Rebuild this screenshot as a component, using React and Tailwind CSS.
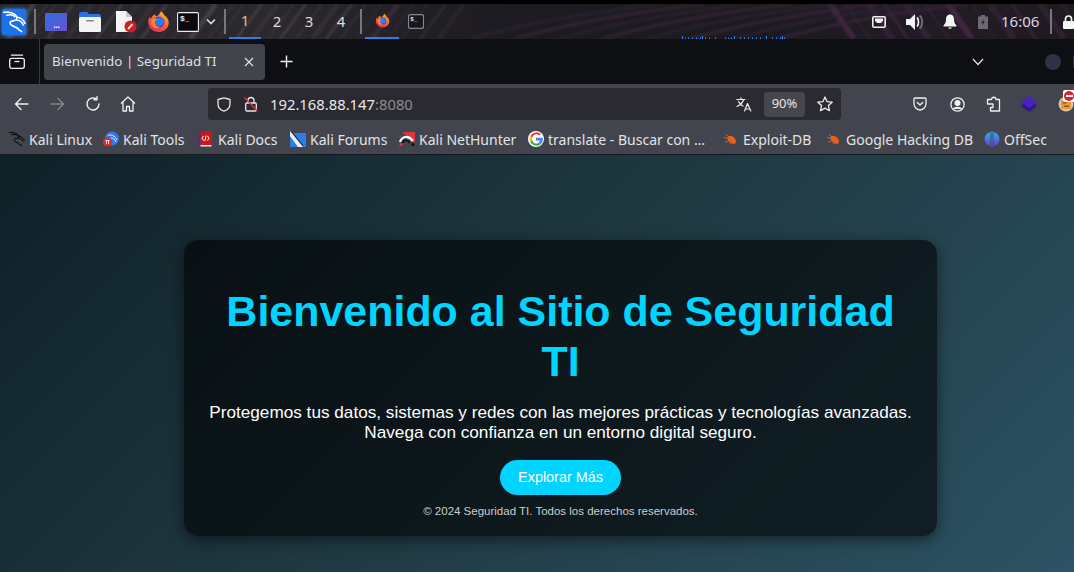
import React from "react";

const Kali = ({ c = "#fff", s = 24, w = 1.7 }) => (
  <svg width={s} height={s} viewBox="0 0 24 24" fill="none" stroke={c} strokeWidth={w} strokeLinecap="round" strokeLinejoin="round">
    <path d="M1 2.5C6 1.5 12 3 14 6.5C15.5 9.5 13.5 11.2 10.5 11.3C7.5 11.5 6.5 13.5 8.5 15.5C10.5 17.5 14.5 17.5 16.5 20.5" />
    <path d="M4 5.5C7.5 4.5 11 5.5 12.5 7M15 7.5C18 8 21.5 10 23 14M14.5 10.5C17.5 11 20 12.5 21 15.5" />
    <path d="M16.5 20.5L19.5 22.5" />
  </svg>
);

const Firefox = ({ s = 22, id = "ffa" }) => (
  <svg width={s} height={s} viewBox="0 0 24 24">
    <defs>
      <linearGradient id={id} x1="0.8" y1="0" x2="0.2" y2="1">
        <stop offset="0" stopColor="#ffbd2e" />
        <stop offset="0.45" stopColor="#ff6b2b" />
        <stop offset="1" stopColor="#e0245e" />
      </linearGradient>
    </defs>
    <path d="M12 23C5.5 23 1.3 18 1.3 12.5C1.3 10 2 8.2 3 7C3.2 8 3.6 8.6 4.3 9C5 6.5 6.8 5 8.5 4.5C8.2 5.5 8.7 6.2 10 6.6C12 5.8 13.5 4 14.5 1.2C17 3 17.6 4.2 18 5.4C21 7.5 22.7 10 22.7 13C22.7 18.5 18.2 23 12 23Z" fill={`url(#${id})`} />
    <circle cx="12.2" cy="12.8" r="6" fill="#5b3bd6" />
    <circle cx="13" cy="12.3" r="4.2" fill="#2f7df0" />
    <path d="M5 10C7 8.5 9.5 8.5 11 10C9 10.5 8.3 11.5 8.3 13C8.3 16 11 18 14 17.6C12 19.6 7 19.6 5 16C4.2 14.2 4.2 12 5 10Z" fill="#ff8a2a" />
  </svg>
);

const Terminal = ({ s = 22, h = 19, small }) => (
  <svg width={s} height={h} viewBox="0 0 22 20" fill="none">
    <rect x="0.6" y="0.6" width="20.8" height="18.8" rx={small ? 2.5 : 1} fill={small ? "#17171b" : "#0b0b0d"} stroke={small ? "#85858a" : "#ececec"} strokeWidth={small ? 1.8 : 1.1} />
    <text x="3" y="9" fill="#eee" fontSize="8" fontFamily="Liberation Mono, monospace" fontWeight="700">$_</text>
  </svg>
);

const Streaks = () => (
  <svg className="absolute inset-0 blur-[0.8px]" width="1074" height="35" viewBox="0 0 1074 35" fill="none" aria-hidden="true">
    {[8, 22, 30, 47, 66, 78, 96, 112, 128, 141, 160, 172, 190, 208, 218, 236, 252, 268, 280, 296, 312, 326, 340, 356, 372, 388, 402, 420, 438].map((x, i) => (
      <path key={i} d={`M${x} 35 L${x + 26} 0`} stroke={i % 3 === 0 ? "#4b484f" : "#38353b"} strokeWidth={i % 4 === 0 ? 5 : 2.5} opacity={x > 340 ? 0.35 : 0.7} />
    ))}
    {[830, 846, 868, 884, 905, 925, 948, 972, 990, 1012, 1040, 1062].map((x, i) => (
      <path key={"b" + i} d={`M${x} 0 L${x + 24} 35`} stroke={i % 3 === 0 ? "#5a3158" : "#3d2a40"} strokeWidth={i % 2 ? 2 : 6} opacity="0.55" />
    ))}
    {Array.from({ length: 8 }).map((_, i) => (
      <path key={"c" + i} d={`M${470 + i * 44} 35 C${530 + i * 44} 18 ${590 + i * 44} 8 ${660 + i * 44} 0`} stroke={i % 2 ? "#3a2638" : "#2c2530"} strokeWidth="4" opacity="0.6" />
    ))}
  </svg>
);

const Sep = ({ cls = "" }) => <span className={`block w-[2px] h-[25px] bg-[#77777c] shrink-0 ${cls}`} />;

const Workspace = ({ n, active }) => (
  <div className={`relative w-[32px] h-[35px] flex items-center justify-center text-[15px] ${active ? "text-[#e9b98a] border-b-2 border-[#2f7be8]" : "text-[#dcdcdc]"}`}>
    {n}
  </div>
);

const TopBar = () => (
  <div className="relative h-[35px] shrink-0 bg-[linear-gradient(90deg,#29272c_0%,#2b282e_25%,#1e1b22_45%,#1b1a20_70%,#221b25_85%,#1f1a20_100%)] overflow-hidden flex items-center">
    <Streaks />
    <div className="relative flex items-center w-full h-full">
      <div className="ml-[2px] w-[24px] h-[26px] rounded-[2px] bg-[#1c72ea] shadow-[0_0_4px_#3a90ff] flex items-center justify-center shrink-0">
        <Kali s={23} />
      </div>
      <Sep cls="ml-[8px]" />
      <svg className="ml-[9px] shrink-0" width="22" height="18" viewBox="0 0 22 18">
        <defs>
          <linearGradient id="pf" x1="0" y1="0" x2="1" y2="1">
            <stop offset="0" stopColor="#2f6fe0" />
            <stop offset="1" stopColor="#6a4fd0" />
          </linearGradient>
        </defs>
        <rect width="22" height="18" rx="1" fill="url(#pf)" />
        <rect x="9" y="13.5" width="1.4" height="1.4" fill="#fff" />
        <rect x="11" y="13.5" width="1.4" height="1.4" fill="#fff" />
        <rect x="13" y="13.5" width="1.4" height="1.4" fill="#fff" />
      </svg>
      <svg className="ml-[12px] shrink-0" width="22" height="20" viewBox="0 0 22 20">
        <path d="M0 2C0 1 1 0 2 0H8L10 2H20C21 2 22 3 22 4V8H0Z" fill="#2a73e0" />
        <rect y="5" width="22" height="15" rx="1.5" fill="#f4f4f4" />
        <rect x="7" y="8" width="8" height="1.4" rx="0.7" fill="#888" />
      </svg>
      <svg className="ml-[14px] shrink-0" width="22" height="23" viewBox="0 0 22 23">
        <path d="M1 1H11L17 7V22H1Z" fill="#f5f5f5" />
        <path d="M11 1L17 7H11Z" fill="#c9c9c9" />
        <circle cx="15.5" cy="16.5" r="6" fill="#d01e22" />
        <path d="M13 19L17.5 14.2" stroke="#fff" strokeWidth="1.8" />
      </svg>
      <div className="ml-[10px] shrink-0 flex"><Firefox s={23} id="ffb" /></div>
      <div className="ml-[7px] shrink-0 flex"><Terminal s={22} h={20} /></div>
      <svg className="ml-[6px] shrink-0" width="12" height="8" viewBox="0 0 12 8" fill="none" stroke="#e0e0e0" strokeWidth="1.6">
        <path d="M2 1.5L6 5.5L10 1.5" />
      </svg>
      <Sep cls="ml-[7px]" />
      <div className="ml-[3px] flex shrink-0 font-['Noto_Sans',sans-serif]">
        <Workspace n="1" active />
        <Workspace n="2" />
        <Workspace n="3" />
        <Workspace n="4" />
      </div>
      <Sep cls="ml-[3px]" />
      <div className="ml-[3px] w-[34px] h-[35px] border-b-2 border-[#2f7be8] flex items-center justify-center shrink-0">
        <Firefox s={15} />
      </div>
      <div className="ml-[9px] flex shrink-0"><Terminal s={16} h={15} small /></div>

      <div className="relative flex-1 h-full">
        <svg className="absolute bottom-0 left-[258px]" width="106" height="3" viewBox="0 0 106 3" fill="#3b84f0">
          {[0,3,6,10,14,18,20,23,27,33,43,46,49,52,58,62,66,70,74,78,84,90,94,98,100,102].map((x) => (
            <rect key={x} x={x} y={x % 4 === 0 ? 0 : 1.5} width="1" height={x % 4 === 0 ? 3 : 1.5} />
          ))}
        </svg>
      </div>

      <svg className="shrink-0" width="14" height="12" viewBox="0 0 14 12" fill="none">
        <rect x="0.8" y="0.8" width="12.4" height="10.4" rx="1.2" stroke="#f0f0f0" strokeWidth="1.6" />
        <rect x="3" y="2.5" width="8" height="3" fill="#f0f0f0" />
        <rect x="4.5" y="5" width="5" height="2" fill="#f0f0f0" />
      </svg>
      <svg className="ml-[20px] shrink-0" width="18" height="16" viewBox="0 0 18 16">
        <path d="M0 5H4L9 0V16L4 11H0Z" fill="#f4f4f4" />
        <path d="M11 3.5C13 5 13 11 11 12.5" stroke="#f4f4f4" strokeWidth="1.6" fill="none" />
        <path d="M13.5 1.5C17 4 17 12 13.5 14.5" stroke="#77777a" strokeWidth="1.6" fill="none" />
      </svg>
      <svg className="ml-[19px] shrink-0" width="14" height="15" viewBox="0 0 14 15">
        <path d="M7 0.5C9.8 0.5 11 2.8 11 5.5C11 8.5 12 10 13.5 11.5V12.5H0.5V11.5C2 10 3 8.5 3 5.5C3 2.8 4.2 0.5 7 0.5Z" fill="#f4f4f4" />
        <rect x="5.5" y="13.4" width="3" height="1.2" fill="#f4f4f4" />
      </svg>
      <svg className="ml-[21px] shrink-0" width="10" height="14" viewBox="0 0 10 14">
        <rect x="3" y="0" width="4" height="2" fill="#6f6a72" />
        <rect y="1.5" width="10" height="12.5" fill="#6f6a72" />
        <path d="M6 3.5L3 8H5L4 11L7 6.5H5Z" fill="#262228" />
      </svg>
      <span className="ml-[13px] w-[37px] shrink-0 text-[15px] text-[#d9d4e4] font-['Noto_Sans',sans-serif] whitespace-nowrap leading-none">16:06</span>
      <Sep cls="ml-[12px]" />
      <svg className="ml-[11px] shrink-0" width="11" height="14" viewBox="0 0 11 14">
        <path d="M2.5 6V4.2C2.5 2.3 3.8 1 5.5 1S8.5 2.3 8.5 4.2V6" stroke="#f4f4f4" strokeWidth="1.7" fill="none" />
        <rect y="6" width="11" height="8" rx="1" fill="#f4f4f4" />
      </svg>
    </div>
  </div>
);

const TabBar = () => (
  <div className="h-[45px] shrink-0 bg-[#0e0f13] flex items-center text-[#e2e2e4]">
    <div className="w-[34px] h-full flex items-center justify-center shrink-0">
      <svg width="16" height="15" viewBox="0 0 16 15" fill="none" stroke="#f2f2f2" strokeWidth="1.3">
        <rect x="0.7" y="4.3" width="14.6" height="10" rx="2" />
        <path d="M2.5 1.2H13.5" strokeLinecap="round" />
        <path d="M5.5 7.5H10.5" />
      </svg>
    </div>
    <span className="ml-[5px] block w-px h-full bg-[#3a3b40] shrink-0" />
    <div className="ml-[4px] w-[221px] h-[36px] rounded-[4px] bg-[#42444c] flex items-center pl-[8px] pr-[11px] shrink-0">
      <span className="flex-1 text-[13.4px] text-[#dfdfe2] font-['Noto_Sans',sans-serif] whitespace-nowrap">Bienvenido | Seguridad TI</span>
      <svg width="10" height="10" viewBox="0 0 10 10" stroke="#e6e6e6" strokeWidth="1.1">
        <path d="M1 1L9 9M9 1L1 9" />
      </svg>
    </div>
    <svg className="ml-[15px] shrink-0" width="13" height="13" viewBox="0 0 13 13" stroke="#f2f2f2" strokeWidth="1.4">
      <path d="M6.5 0.5V12.5M0.5 6.5H12.5" />
    </svg>
    <div className="flex-1" />
    <svg className="shrink-0" width="12" height="8" viewBox="0 0 12 8" fill="none" stroke="#e8e8e8" strokeWidth="1.2">
      <path d="M1 1L6 6.5L11 1" />
    </svg>
    <span className="ml-[61px] block w-[16px] h-[16px] rounded-full bg-[#2e3344] shrink-0" />
    <span className="ml-[12px] block w-[1px] h-[12px] bg-[#2e3344] shrink-0" />
  </div>
);

const Toolbar = () => (
  <div className="h-[41px] shrink-0 bg-[#42454d] flex items-start pt-[4px]">
    <div className="w-[208px] h-[32px] flex items-center shrink-0">
      <svg className="ml-[14px]" width="15" height="14" viewBox="0 0 15 14" fill="none" stroke="#f0f0f2" strokeWidth="1.4" strokeLinecap="round" strokeLinejoin="round">
        <path d="M14 7H1.5M7 1.5L1.5 7L7 12.5" />
      </svg>
      <svg className="ml-[21px]" width="15" height="14" viewBox="0 0 15 14" fill="none" stroke="#85878d" strokeWidth="1.4" strokeLinecap="round" strokeLinejoin="round">
        <path d="M1 7H13.5M8 1.5L13.5 7L8 12.5" />
      </svg>
      <svg className="ml-[20px]" width="16" height="16" viewBox="0 0 16 16" fill="none" stroke="#f0f0f2" strokeWidth="1.4" strokeLinecap="round" strokeLinejoin="round">
        <path d="M14 8A6 6 0 1 1 11.5 3.1" />
        <path d="M12 0.8V3.8H9" />
      </svg>
      <svg className="ml-[19px]" width="16" height="16" viewBox="0 0 16 16" fill="none" stroke="#f0f0f2" strokeWidth="1.3" strokeLinejoin="round">
        <path d="M1 7.5L8 1L15 7.5M3 6V15H6.5V10.5H9.5V15H13V6" />
      </svg>
    </div>
    <div className="w-[633px] h-[32px] rounded-[4px] bg-[#2b2a31] flex items-center shrink-0">
      <svg className="ml-[9px] shrink-0" width="14" height="15" viewBox="0 0 14 15" fill="none" stroke="#e6e6e8" strokeWidth="1.3" strokeLinejoin="round">
        <path d="M7 0.8L13 2.5V7C13 10.5 10.5 13 7 14.2C3.5 13 1 10.5 1 7V2.5Z" />
      </svg>
      <svg className="ml-[13px] shrink-0" width="14" height="16" viewBox="0 0 14 16" fill="none">
        <path d="M4 7V4.5C4 2.8 5.2 1.5 7 1.5S10 2.8 10 4.5V7" stroke="#e6e6e8" strokeWidth="1.3" />
        <rect x="1.7" y="7" width="10.6" height="8" rx="1.2" stroke="#e6e6e8" strokeWidth="1.3" />
        <path d="M0.5 1.5L13.5 15" stroke="#e0393e" strokeWidth="1.4" />
      </svg>
      <span className="ml-[12px] text-[14.8px] text-[#e8e8ea] font-['Noto_Sans',sans-serif] whitespace-nowrap">
        192.168.88.147<span className="text-[#8a8a90]">:8080</span>
      </span>
      <div className="flex-1" />
      <svg className="shrink-0" width="16" height="15" viewBox="0 0 16 15" fill="none" stroke="#ececee" strokeWidth="1.2" strokeLinecap="round" strokeLinejoin="round">
        <path d="M0.8 2.5H9M5 0.8V2.5M7.5 2.5C6.8 5.5 4.5 8 1 9.5M2.5 4.5C3.5 6.5 5 8 7 9" />
        <path d="M8.5 14L11.5 6.5L14.8 14M9.5 12H13.8" />
      </svg>
      <span className="ml-[12px] w-[41px] h-[25px] rounded-[4px] bg-[#47464d] text-[13px] text-[#e4e4e6] font-['Noto_Sans',sans-serif] flex items-center justify-center shrink-0">90%</span>
      <svg className="ml-[12px] mr-[8px] shrink-0" width="16" height="16" viewBox="0 0 16 16" fill="none" stroke="#ececee" strokeWidth="1.3" strokeLinejoin="round">
        <path d="M8 1L10.1 5.7L15.2 6.2L11.4 9.6L12.5 14.7L8 12.1L3.5 14.7L4.6 9.6L0.8 6.2L5.9 5.7Z" />
      </svg>
    </div>
    <div className="flex-1 h-[32px] flex items-center relative">
      <svg className="ml-[72px] shrink-0" width="14" height="14" viewBox="0 0 14 14" fill="none" stroke="#f0f0f2" strokeWidth="1.3" strokeLinejoin="round" strokeLinecap="round">
        <path d="M2 1H12C12.6 1 13 1.4 13 2V6.5C13 10 10.3 13 7 13S1 10 1 6.5V2C1 1.4 1.4 1 2 1Z" />
        <path d="M4.3 5.5L7 8L9.7 5.5" />
      </svg>
      <svg className="ml-[23px] shrink-0" width="15" height="15" viewBox="0 0 15 15" fill="none" stroke="#f0f0f2" strokeWidth="1.3">
        <circle cx="7.5" cy="7.5" r="6.6" />
        <circle cx="7.5" cy="6" r="2.4" fill="#f0f0f2" />
        <path d="M3.5 12C4.5 10 10.5 10 11.5 12" fill="#f0f0f2" />
      </svg>
      <svg className="ml-[21px] shrink-0" width="15" height="16" viewBox="0 0 15 16" fill="none" stroke="#f0f0f2" strokeWidth="1.3" strokeLinejoin="round">
        <path d="M5.5 3.5C5.5 0.5 10 0.5 10 3.5H13.5V15H4.5V11.5H7V8H1.5V3.5Z" />
      </svg>
      <svg className="ml-[20px] shrink-0" width="16" height="16" viewBox="0 0 16 16">
        <path d="M8 4L16 10L8 16L0 10Z" fill="#2a1a8a" />
        <path d="M8 0L16 6L8 12L0 6Z" fill="#4a22c0" />
      </svg>
      <div className="relative ml-[21px] shrink-0 w-[16px] h-[16px]">
        <svg width="16" height="16" viewBox="0 0 16 16">
          <circle cx="8" cy="8" r="7.5" fill="#d8c2a8" />
          <rect x="3" y="4" width="10" height="9" rx="1" fill="#e79a32" />
          <rect x="4.5" y="6" width="4" height="1.5" fill="#8a5a22" />
          <rect x="6" y="9.5" width="5" height="1.5" fill="#8a5a22" />
        </svg>
        <span className="absolute -top-[6px] left-[5px] w-[12px] h-[12px] rounded-[2px] bg-white flex items-center justify-center">
          <span className="w-[10px] h-[10px] rounded-full bg-[#d8232a] flex items-center justify-center">
            <span className="block w-[7px] h-[2px] bg-white" />
          </span>
        </span>
      </div>
    </div>
  </div>
);

const Bug = () => (
  <svg width="16" height="16" viewBox="0 0 16 16" className="shrink-0" fill="none">
    <ellipse cx="8.7" cy="8.7" rx="3.2" ry="5" fill="#e8601c" transform="rotate(-50 8.7 8.7)" />
    <path d="M1 6.5L6 7.5M3 3.5L7 6.5M2 11L6 10M7 13L8.5 11.5M11 13.5L11 11" stroke="#e8601c" strokeWidth="0.9" />
  </svg>
);

const marks = {
  linux: <Kali c="#000" s={16} w={1.5} />,
  tools: (
    <svg width="16" height="16" viewBox="0 0 16 16" className="shrink-0">
      <circle cx="9" cy="7.5" r="7" fill="#3278e6" />
      <path d="M5 4.5C8 3 12 5 14 9M8 7C10 7 12 8.5 13 11" stroke="#fff" strokeWidth="0.9" fill="none" />
      <circle cx="4.5" cy="11" r="4.5" fill="#dd2a2a" />
      <path d="M2.5 9.5H6.5M3.5 9.5V13M5.5 9.5V13" stroke="#fff" strokeWidth="0.8" />
    </svg>
  ),
  docs: (
    <svg width="16" height="16" viewBox="0 0 16 16" className="shrink-0">
      <rect x="0.5" y="0.5" width="13" height="13.5" fill="#c8181c" />
      <rect x="0.5" y="0.5" width="2" height="15" fill="#283f8e" />
      <rect x="2.5" y="14" width="11" height="1.5" fill="#e8e8e8" />
      <path d="M5.5 5L4 7.2L5.5 9.5M9.5 5L11 7.2L9.5 9.5M8.2 4.5L6.8 10" stroke="#fff" strokeWidth="1" fill="none" />
    </svg>
  ),
  forums: (
    <svg width="16" height="16" viewBox="0 0 16 16" className="shrink-0">
      <rect y="2" width="16" height="14" fill="#2f7be8" />
      <path d="M0 0L13 16H8L0 5Z" fill="#f1f1f1" />
      <path d="M2 1L13 15" stroke="#1a1a1a" strokeWidth="1" />
    </svg>
  ),
  hunter: (
    <svg width="16" height="16" viewBox="0 0 16 16" className="shrink-0">
      <path d="M3 1H16V12Z" fill="#e0343c" />
      <path d="M1 11C3 5 9 4 14 10" stroke="#fff" strokeWidth="2.2" fill="none" />
      <path d="M3.5 12C5 8.5 8.5 8.5 11 12" stroke="#141414" strokeWidth="1.8" fill="none" />
      <circle cx="2" cy="13.5" r="1.6" fill="#e0343c" />
      <circle cx="14" cy="13.5" r="1.6" fill="#141414" />
    </svg>
  ),
  google: (
    <svg width="16" height="16" viewBox="0 0 16 16" className="shrink-0">
      <circle cx="8" cy="8" r="8" fill="#fff" />
      <path d="M8 3.3A4.7 4.7 0 0 1 11.2 4.5L12.9 2.9A7 7 0 0 0 2.2 5L4.2 6.5A4.7 4.7 0 0 1 8 3.3Z" fill="#ea4335" />
      <path d="M4.2 6.5L2.2 5A7 7 0 0 0 2.2 11L4.2 9.5A4.7 4.7 0 0 1 4.2 6.5Z" fill="#fbbc05" />
      <path d="M8 12.7A4.7 4.7 0 0 1 4.2 9.5L2.2 11A7 7 0 0 0 12.7 13.2L10.8 11.8A4.7 4.7 0 0 1 8 12.7Z" fill="#34a853" />
      <path d="M14.8 8.2C14.8 7.7 14.8 7.2 14.7 6.8H8V9.4H11.9A3.4 3.4 0 0 1 10.8 11.8L12.7 13.2C14 12 14.8 10.3 14.8 8.2Z" fill="#4285f4" />
    </svg>
  ),
  offsec: (
    <svg width="16" height="16" viewBox="0 0 16 16" className="shrink-0">
      <defs>
        <linearGradient id="os" x1="0" y1="0" x2="0" y2="1">
          <stop offset="0" stopColor="#2ab0e8" />
          <stop offset="1" stopColor="#6a3fd8" />
        </linearGradient>
      </defs>
      <path d="M6.5 1C2.5 2 0.5 5 0.5 8S2.5 14 6.5 15Z" fill="url(#os)" />
      <path d="M9.5 1C13.5 2 15.5 5 15.5 8S13.5 14 9.5 15Z" fill="url(#os)" />
      <rect x="7.4" y="0" width="1.2" height="16" fill="url(#os)" />
    </svg>
  ),
  bug: <Bug />,
};

const items = [
  ["linux", "Kali Linux", 62],
  ["tools", "Kali Tools", 63],
  ["docs", "Kali Docs", 60],
  ["forums", "Kali Forums", 77],
  ["hunter", "Kali NetHunter", 97],
  ["google", "translate - Buscar con …", 163],
  ["bug", "Exploit-DB", 71],
  ["bug", "Google Hacking DB", 126],
  ["offsec", "OffSec", 44],
];

const Bookmarks = () => (
  <div className="h-[30px] shrink-0 bg-[#42454d] border-b border-[#16191d] flex items-center pl-[9px] gap-[12px] pb-[1px]">
    {items.map(([m, t, w]) => (
      <div key={t} className="flex items-center gap-[4px] shrink-0">
        <span className="w-[16px] h-[16px] flex shrink-0">{marks[m]}</span>
        <span className="text-[14px] text-[#e3e3e6] font-['Noto_Sans',sans-serif] whitespace-nowrap" style={{ width: w }}>{t}</span>
      </div>
    ))}
  </div>
);

export default function App() {
  return (
    <div className="w-[1074px] h-[572px] overflow-hidden flex flex-col bg-black">
      <div className="h-[4px] shrink-0 bg-black" />
      <TopBar />
      <TabBar />
      <Toolbar />
      <Bookmarks />
      <main className="flex-1 bg-[linear-gradient(135deg,#0f2027,#203a43,#2c5364)] flex items-start pl-[184px] pt-[85px] font-['Liberation_Sans',Arial,sans-serif]">
        <div className="w-[753px] h-[296px] rounded-[14px] bg-[rgba(0,0,0,0.6)] shadow-[0_4px_15px_rgba(0,0,0,0.5)] flex flex-col items-center text-center pt-[46px] px-[18px]">
          <h1 className="text-[42.96px] leading-[50px] font-bold text-[#00d4ff]">Bienvenido al Sitio de Seguridad TI</h1>
          <p className="mt-[16px] text-[17.18px] leading-[20px] text-white">
            Protegemos tus datos, sistemas y redes con las mejores prácticas y tecnologías avanzadas. Navega con confianza en un entorno digital seguro.
          </p>
          <button className="mt-[18px] w-[121px] h-[35px] rounded-full bg-[#00d4ff] text-white text-[14.4px]">Explorar Más</button>
          <p className="mt-[10px] text-[11.5px] leading-[13px] text-[#cccccc]">© 2024 Seguridad TI. Todos los derechos reservados.</p>
        </div>
      </main>
    </div>
  );
}
